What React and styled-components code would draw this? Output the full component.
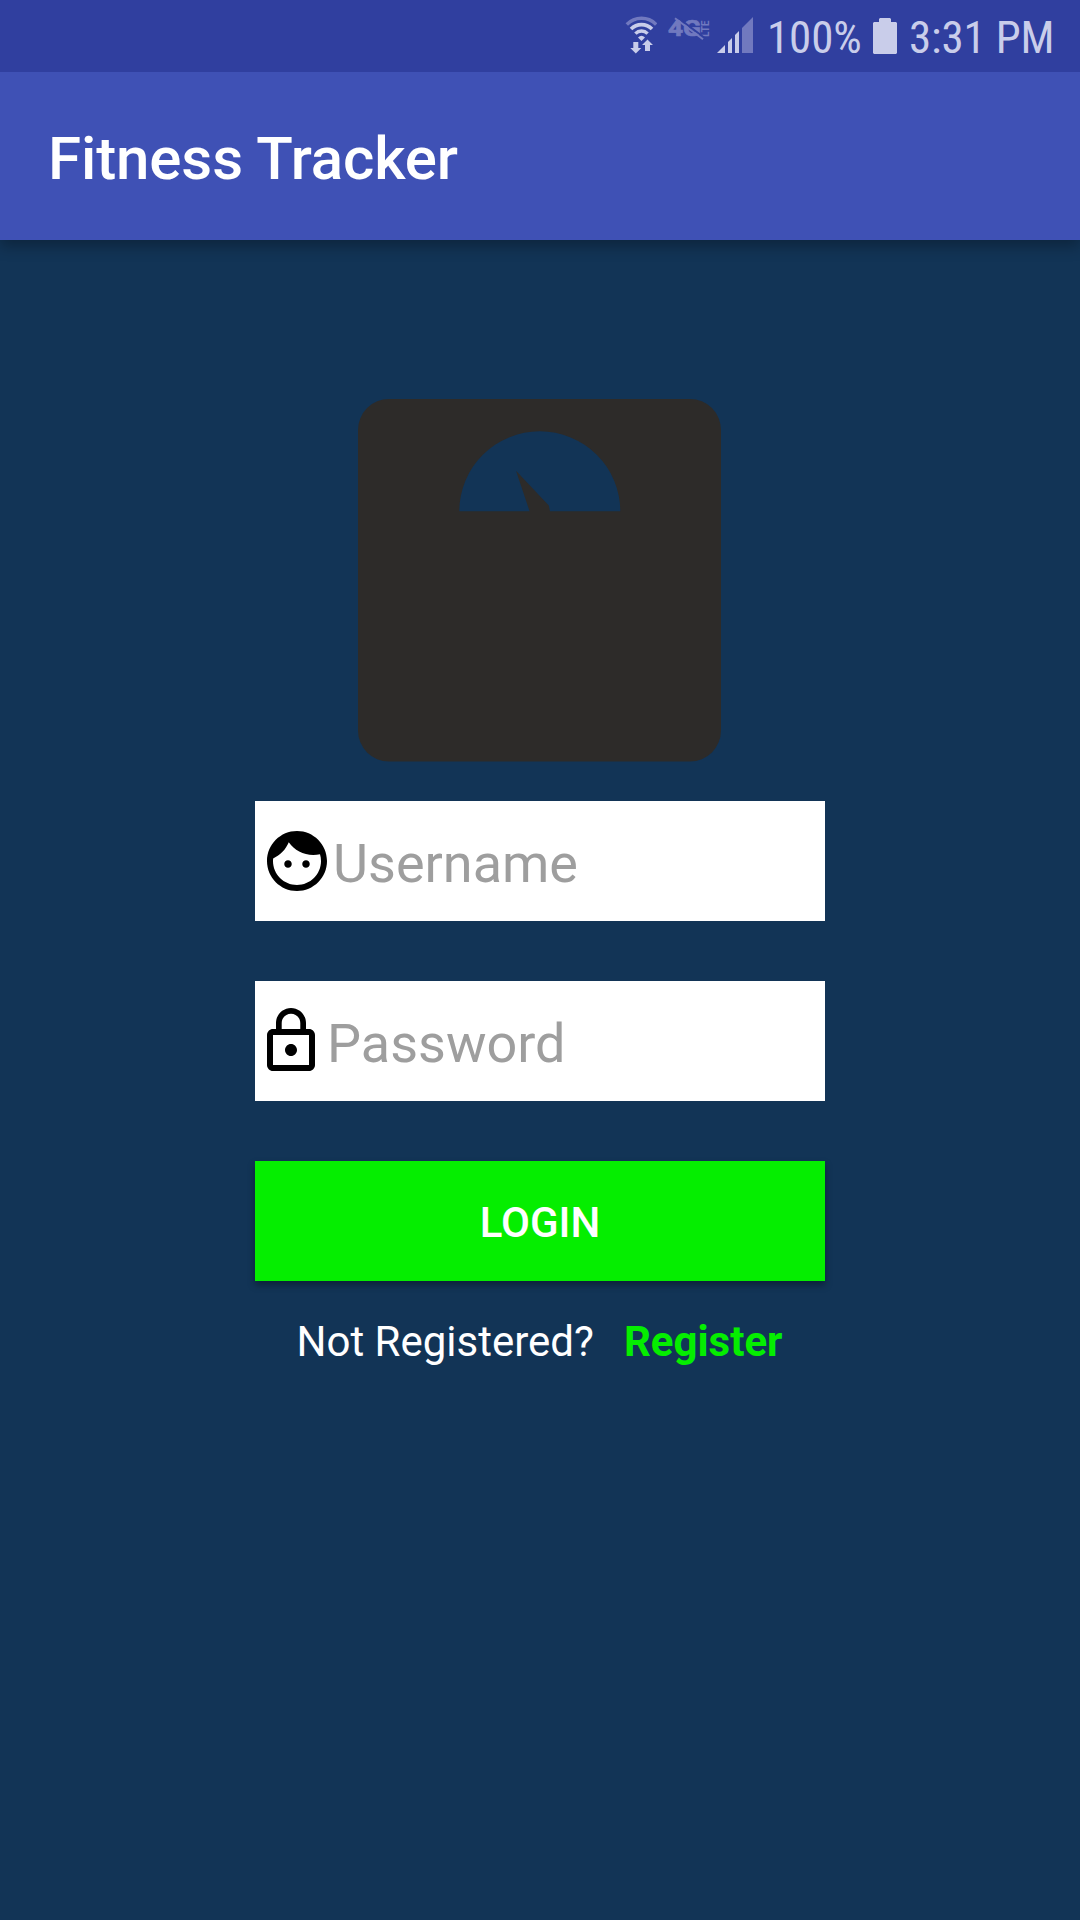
import React from "react";
import styled, { createGlobalStyle } from "styled-components";

const GlobalStyle = createGlobalStyle`
  *, *::before, *::after { box-sizing: border-box; }
  body {
    margin: 0;
    background: #123456;
    font-family: Roboto, "Noto Sans", sans-serif;
  }
`;

const BRIGHT = "#c9cdea";
const DIM = "#7179bf";

const Screen = styled.div`
  display: flex;
  flex-direction: column;
  width: 1080px;
  height: 1920px;
  overflow: hidden;
  background: #123456;
`;

const StatusBar = styled.header`
  position: relative;
  z-index: 1;
  display: flex;
  flex: none;
  align-items: flex-start;
  height: 72px;
  padding-left: 625px;
  background: #303f9f;
`;

const StatusIcon = styled.svg`
  display: block;
  flex: none;
  width: ${(p) => p.$width}px;
  height: 72px;
  margin-right: ${(p) => p.$gap}px;
`;

const StatusText = styled.span`
  flex: none;
  width: ${(p) => p.$width}px;
  padding-top: 3px;
  font-family: "Roboto Condensed", Roboto, sans-serif;
  font-stretch: 75%;
  font-size: 45px;
  line-height: 70px;
  letter-spacing: -0.15px;
  white-space: nowrap;
  color: ${BRIGHT};
`;

const AppBar = styled.div`
  position: relative;
  display: flex;
  flex: none;
  align-items: center;
  height: 168px;
  padding: 5px 48px 0;
  background: #3f51b5;
  box-shadow: 0 6px 14px rgba(0, 0, 0, 0.3);
`;

const Title = styled.h1`
  margin: 0;
  font-size: 60px;
  font-weight: 500;
  line-height: 70px;
  letter-spacing: -0.1px;
  color: #fff;
`;

const Main = styled.main`
  display: flex;
  flex-direction: column;
  align-items: center;
  padding-top: 159px;
`;

const ScaleLogo = styled.svg`
  display: block;
  width: 364px;
  height: 363px;
  margin-bottom: 39px;
`;

const Form = styled.div`
  display: flex;
  flex-direction: column;
  gap: 60px;
  width: 570px;
`;

const Field = styled.div`
  display: flex;
  align-items: center;
  gap: ${(p) => p.$gap}px;
  height: 120px;
  padding-left: 12px;
  background: #fff;
`;

const FieldIcon = styled.svg`
  display: block;
  flex: none;
  width: ${(p) => p.$width}px;
  height: ${(p) => p.$height}px;
  margin-top: ${(p) => p.$top || 0}px;
`;

const Hint = styled.span`
  padding-top: 5px;
  font-size: 54px;
  line-height: 64px;
  color: #9e9e9e;
`;

const LoginButton = styled.button`
  height: 120px;
  padding: 3px 0 0;
  border: 0;
  font-family: inherit;
  font-size: 42px;
  font-weight: 500;
  line-height: 50px;
  color: #fff;
  background: #05ee00;
  box-shadow: 0 4px 7px rgba(0, 0, 0, 0.35);
`;

const Footer = styled.div`
  display: flex;
  gap: 30px;
  padding-top: 36px;
  margin-left: -1px;
  font-size: 42px;
  line-height: 50px;
  color: #fff;
`;

const RegisterLink = styled.span`
  font-weight: 700;
  color: #05ee00;
`;

function WifiIcon() {
  return (
    <StatusIcon $width={32} $gap={11} viewBox="625 0 32 72" fill="none">
      <path d="M626.8 24.5a20.5 20.5 0 0 1 29.4 0" stroke={DIM} strokeWidth="3.4" />
      <path d="M631 29a14.8 14.8 0 0 1 21 0" stroke={BRIGHT} strokeWidth="3.6" />
      <path d="M635.4 33.6a8.6 8.6 0 0 1 12.2 0" stroke={BRIGHT} strokeWidth="3.4" />
      <path d="M638 37.5q3.5-3.4 7 0l-3.5 3.5z" fill={BRIGHT} />
      <path d="M633.3 42h5v6h3l-5.5 5.6-5.5-5.6h3z" fill={BRIGHT} />
      <path d="M645 51h5v-6h3l-5.5-5.4-5.5 5.4h3z" fill={BRIGHT} />
    </StatusIcon>
  );
}

function LteIcon() {
  return (
    <StatusIcon $width={42} $gap={7} viewBox="668 0 42 72">
      <text x="668" y="36" fontFamily="Roboto, sans-serif" fontWeight="700" fontSize="21.5" textLength="33" lengthAdjust="spacingAndGlyphs" fill={DIM} stroke={DIM} strokeWidth="0.7">4G</text>
      <text transform="translate(708.6 37) rotate(-90)" fontFamily="Roboto, sans-serif" fontWeight="700" fontSize="10" textLength="16.5" lengthAdjust="spacingAndGlyphs" fill={DIM}>LTE</text>
      <path d="M676.5 16.8L704.5 37.8" stroke="#303f9f" strokeWidth="2" />
      <path d="M675 18.2L703 39.2" stroke={DIM} strokeWidth="2" />
    </StatusIcon>
  );
}

function SignalIcon() {
  return (
    <StatusIcon $width={36} $gap={14} viewBox="717 0 36 72">
      <path d="M717 53l8-8v8zM728 53V42l4-4v15zM735 53V35l4-4v22z" fill={BRIGHT} />
      <path d="M742 53V28l11-11v36z" fill={DIM} />
    </StatusIcon>
  );
}

function BatteryIcon() {
  return (
    <StatusIcon $width={24} $gap={12} viewBox="873 0 24 72">
      <path d="M874 22h5v-3l1-1h10l1 1v3h5l1 1v30l-1 1h-22l-1-1V23z" fill={BRIGHT} />
    </StatusIcon>
  );
}

export default function App() {
  return (
    <>
      <GlobalStyle />
      <Screen>
        <StatusBar>
          <WifiIcon />
          <LteIcon />
          <SignalIcon />
          <StatusText $width={106}>100%</StatusText>
          <BatteryIcon />
          <StatusText $width={150}>3:31 PM</StatusText>
        </StatusBar>
        <AppBar>
          <Title>Fitness Tracker</Title>
        </AppBar>
        <Main>
          <ScaleLogo viewBox="358 399 364 363">
            <rect x="358" y="399" width="363" height="362.5" rx="31" fill="#2d2b29" />
            <path d="M459.3 511.3a80.5 80 0 0 1 161 0H550l-1.2-5.8L516 470.7l13.6 40.6z" fill="#123456" />
          </ScaleLogo>
          <Form>
            <Field $gap={6}>
              <FieldIcon $width={60} $height={60} viewBox="2 2 20 20">
                <path d="M9 11.75c-.69 0-1.25.56-1.25 1.25s.56 1.25 1.25 1.25 1.25-.56 1.25-1.25-.56-1.25-1.25-1.25zm6 0c-.69 0-1.25.56-1.25 1.25s.56 1.25 1.25 1.25 1.25-.56 1.25-1.25-.56-1.25-1.25-1.25zM12 2C6.48 2 2 6.48 2 12s4.48 10 10 10 10-4.48 10-10S17.52 2 12 2zm0 18c-4.41 0-8-3.59-8-8 0-.29.02-.58.05-.86 2.36-1.05 4.23-2.98 5.21-5.37C11.07 8.33 14.05 10 17.42 10c.78 0 1.53-.09 2.25-.26.21.71.33 1.47.33 2.26 0 4.41-3.59 8-8 8z" />
              </FieldIcon>
              <Hint>Username</Hint>
            </Field>
            <Field $gap={12}>
              <FieldIcon $width={48} $height={63} $top={-3} viewBox="4 1 16 21">
                <path d="M12 17c1.1 0 2-.9 2-2s-.9-2-2-2-2 .9-2 2 .9 2 2 2zm6-9h-1V6c0-2.76-2.24-5-5-5S7 3.24 7 6v2H6c-1.1 0-2 .9-2 2v10c0 1.1.9 2 2 2h12c1.1 0 2-.9 2-2V10c0-1.1-.9-2-2-2zM8.9 6c0-1.71 1.39-3.1 3.1-3.1s3.1 1.39 3.1 3.1v2H8.9V6zM18 20H6V10h12v10z" />
              </FieldIcon>
              <Hint>Password</Hint>
            </Field>
            <LoginButton type="button">LOGIN</LoginButton>
          </Form>
          <Footer>
            <span>Not Registered?</span>
            <RegisterLink>Register</RegisterLink>
          </Footer>
        </Main>
      </Screen>
    </>
  );
}
